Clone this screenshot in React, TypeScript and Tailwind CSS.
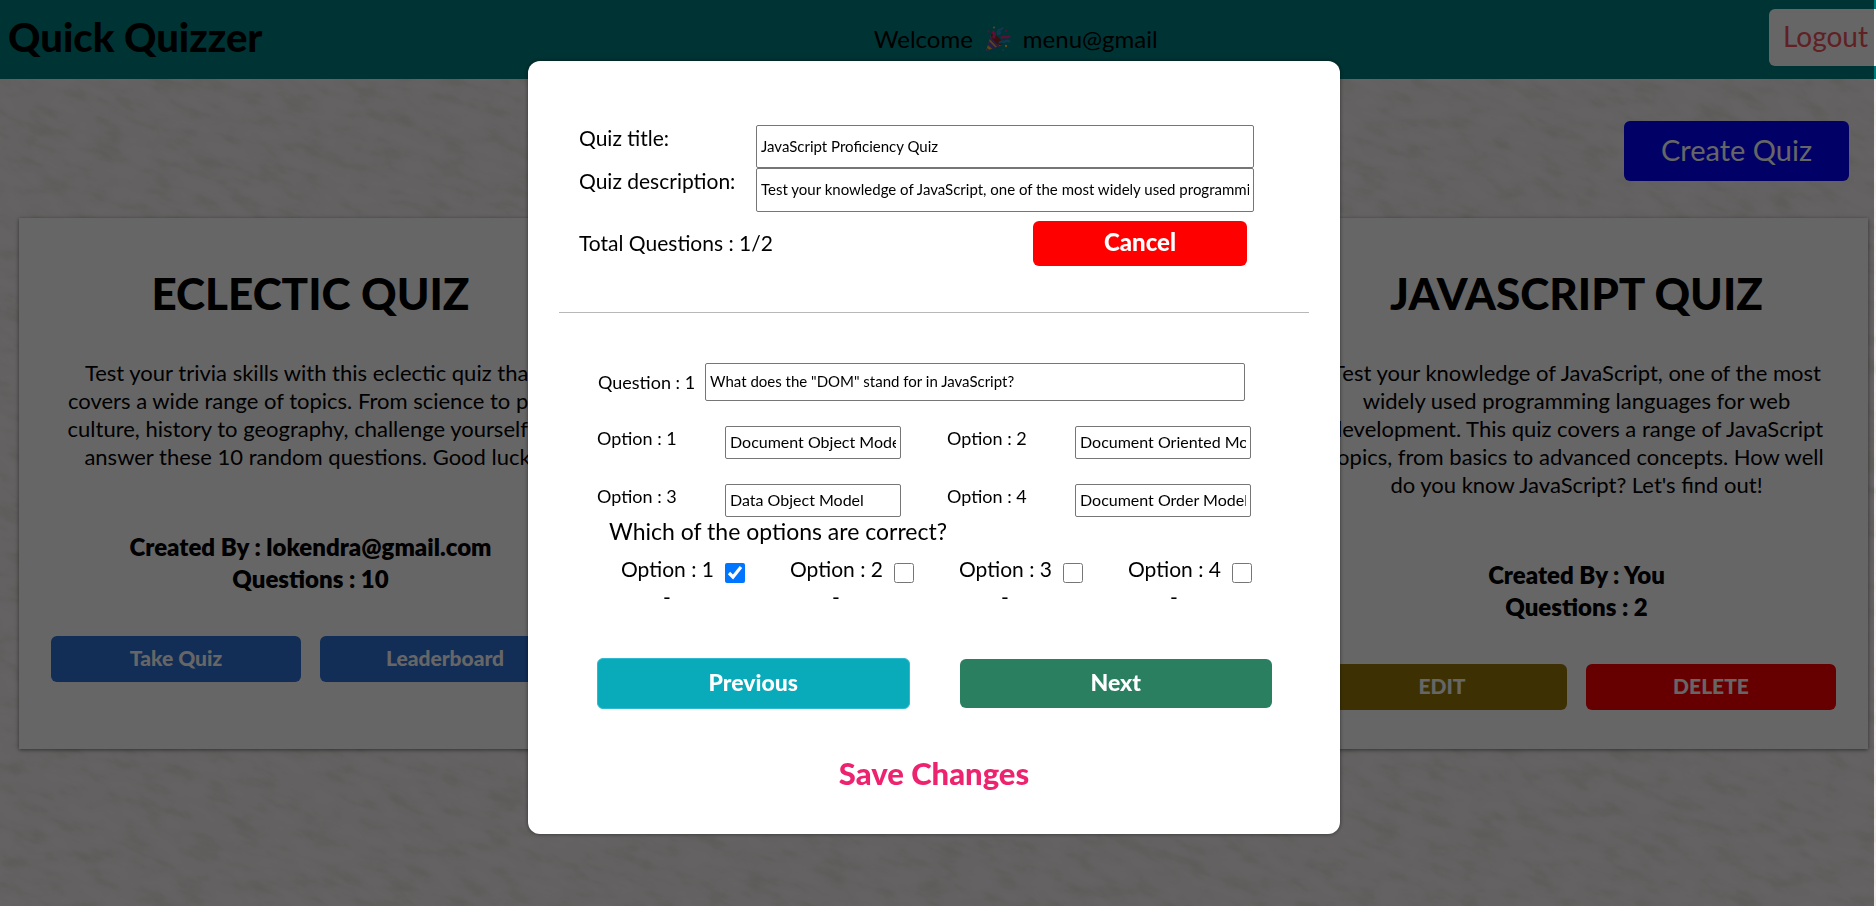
import { useState } from "react";

type Action = { label: string; tone: string };
type Quiz = {
  title: string;
  lines: string[];
  author: string;
  questions: number;
  actions: Action[];
};

const quizzes: Quiz[] = [
  {
    title: "ECLECTIC QUIZ",
    lines: [
      "Test your trivia skills with this eclectic quiz that",
      "covers a wide range of topics. From science to pop",
      "culture, history to geography, challenge yourself to",
      "answer these 10 random questions. Good luck!",
    ],
    author: "lokendra@gmail.com",
    questions: 10,
    actions: [
      { label: "Take Quiz", tone: "bg-[#2d70d8]" },
      { label: "Leaderboard", tone: "bg-[#2d70d8]" },
    ],
  },
  {
    title: "JAVASCRIPT QUIZ",
    lines: [
      "Test your knowledge of JavaScript, one of the most",
      "widely used programming languages for web",
      "development. This quiz covers a range of JavaScript",
      "topics, from basics to advanced concepts. How well",
      "do you know JavaScript? Let's find out!",
    ],
    author: "You",
    questions: 2,
    actions: [
      { label: "EDIT", tone: "bg-[#9a7b0a]" },
      { label: "DELETE", tone: "bg-[#ff0000]" },
    ],
  },
];

function PaperTexture() {
  return (
    <svg className="absolute inset-0 size-full" aria-hidden="true">
      <filter id="paper" x="0" y="0" width="100%" height="100%" colorInterpolationFilters="sRGB">
        <feTurbulence type="fractalNoise" baseFrequency="0.03 0.07" numOctaves="5" seed="8" />
        <feColorMatrix type="matrix" values="1 0 0 0 0  1 0 0 0 0  1 0 0 0 0  0 0 0 0 1" />
        <feComponentTransfer>
          <feFuncR type="table" tableValues="0.91 0.91 0.92 0.935 0.955 0.97 0.975 0.98 0.98 0.98 0.98" />
          <feFuncG type="table" tableValues="0.905 0.905 0.91 0.925 0.94 0.95 0.955 0.96 0.96 0.96 0.96" />
          <feFuncB type="table" tableValues="0.89 0.89 0.9 0.915 0.935 0.95 0.957 0.965 0.965 0.965 0.965" />
        </feComponentTransfer>
      </filter>
      <g transform="rotate(20)">
        <rect x="-100" y="-900" width="2500" height="2000" filter="url(#paper)" />
      </g>
    </svg>
  );
}

function PartyPopper() {
  return (
    <svg viewBox="0 0 26 26" className="size-[26px]" role="img" aria-label="party popper">
      <path d="M1 25 L6 9 C10 10 16 15 17 19 Z" fill="#f0a83a" />
      <path d="M4 15 L11 22 L7.500 23 L2.700 19 Z M5.500 10.500 L15 20.500 L12.500 21.500 L4.600 13 Z M2 22 L4.500 24 L1 25 Z" fill="#5a4fc0" />
      <ellipse cx="11.500" cy="13.500" rx="3" ry="7.500" transform="rotate(-45 11.500 13.500)" fill="#8c2a2a" />
      <path d="M8 12 C11 9 9 7 7.500 5" fill="none" stroke="#e0288c" strokeWidth="3" />
      <path d="M13 9 C12 5 15 4 15 7 C15 9 12 8 13 5 C14 3 17 4 18 1.500" fill="none" stroke="#2a8ac8" strokeWidth="2" />
      <path d="M14 17 C17 14 18 17 21 15 C23 14 24 15 25 16" fill="none" stroke="#2a8ac8" strokeWidth="2.400" />
      <path d="M16 12 C19 9 21 13 25 10" fill="none" stroke="#e0288c" strokeWidth="2.600" />
      <circle cx="9" cy="1.500" r="1" fill="#f0b83a" />
      <circle cx="3.500" cy="5.500" r="1.100" fill="#e0288c" />
      <circle cx="21" cy="5" r="1.100" fill="#e0288c" />
      <circle cx="21" cy="20" r="1.200" fill="#f0b83a" />
      <circle cx="18" cy="24" r="1" fill="#2a8ac8" />
    </svg>
  );
}

function QuizCard({ quiz }: { quiz: Quiz }) {
  return (
    <article className="flex min-h-[531px] w-[583px] flex-col items-center bg-white px-8 pt-[50px] text-center shadow-[0_1px_4px_rgba(0,0,0,0.5)]">
      <h2 className="text-[44px] leading-[50px] font-black">{quiz.title}</h2>
      <p className="mt-[41px] text-[22px] leading-7 whitespace-nowrap">
        {quiz.lines.map((line) => (
          <span key={line} className="block">
            {line}
          </span>
        ))}
      </p>
      <div className="mt-[60px] text-[24px] leading-8 font-extrabold">
        <p>Created By : {quiz.author}</p>
        <p>Questions : {quiz.questions}</p>
      </div>
      <div className="mt-[41px] flex gap-[19px] self-stretch">
        {quiz.actions.map((action) => (
          <button
            key={action.label}
            type="button"
            className={`h-[46px] flex-1 rounded-md pb-0.5 text-[21px] font-black text-white ${action.tone}`}
          >
            {action.label}
          </button>
        ))}
      </div>
    </article>
  );
}

const fieldStyle = "min-w-0 rounded-[2px] border border-[#767676] bg-white px-1 pb-0.5 text-[15px] text-black";
const optionStyle =
  "h-[33px] w-[176px] min-w-0 rounded-[2px] border border-[#767676] bg-white px-1 pb-0.5 text-[16px] text-black";

function EditDialog() {
  const [title, setTitle] = useState("JavaScript Proficiency Quiz");
  const [description, setDescription] = useState(
    "Test your knowledge of JavaScript, one of the most widely used programming languages for web development.",
  );
  const [question, setQuestion] = useState('What does the "DOM" stand for in JavaScript?');
  const [options, setOptions] = useState([
    "Document Object Model",
    "Document Oriented Model",
    "Data Object Model",
    "Document Order Model",
  ]);
  const [correct, setCorrect] = useState([true, false, false, false]);

  return (
    <form
      role="dialog"
      aria-label="Edit quiz"
      className="flex h-fit w-[812px] flex-col rounded-xl bg-white px-[31px] pt-16 pb-10 text-black shadow-[0_0_4px_rgba(0,0,0,0.5)]"
      onSubmit={(e) => e.preventDefault()}
    >
      <div className="grid grid-cols-[177px_498px] pl-5 text-[21px]">
        <label htmlFor="title" className="leading-[26px]">
          Quiz title:
        </label>
        <input id="title" className={`${fieldStyle} h-[43px]`} value={title} onChange={(e) => setTitle(e.target.value)} />
        <label htmlFor="description" className="leading-[26px]">
          Quiz description:
        </label>
        <input
          id="description"
          className={`${fieldStyle} h-11`}
          value={description}
          onChange={(e) => setDescription(e.target.value)}
        />
      </div>
      <div className="mt-[9px] flex items-center justify-between pr-[62px] pl-5">
        <p className="pb-0.5 text-[21px]">Total Questions : 1/2</p>
        <button type="button" className="h-[45px] w-[214px] rounded-md bg-[#ff0000] pb-1 text-[24px] font-black text-white">
          Cancel
        </button>
      </div>
      <hr className="mt-[46px] border-[#b8b8b8]" />

      <div className="mt-[50px] flex items-center justify-between pr-16 pl-[39px]">
        <label htmlFor="question" className="text-[18px]">
          Question : 1
        </label>
        <input
          id="question"
          className={`${fieldStyle} h-[38px] w-[540px]`}
          value={question}
          onChange={(e) => setQuestion(e.target.value)}
        />
      </div>
      <div className="mt-[25px] grid grid-cols-[304px_304px] gap-x-[46px] gap-y-[25px] pl-[38px]">
        {options.map((option, i) => (
          <div key={i} className="flex justify-between">
            <label htmlFor={`option-${i}`} className="text-[18px] leading-6">
              Option : {i + 1}
            </label>
            <input
              id={`option-${i}`}
              className={optionStyle}
              value={option}
              onChange={(e) => setOptions(options.map((o, n) => (n === i ? e.target.value : o)))}
            />
          </div>
        ))}
      </div>

      <fieldset className="pl-[50px]">
        <legend className="text-[23px] leading-7">Which of the options are correct?</legend>
        <div className="grid grid-cols-4 pt-3 pr-3 pl-3">
          {correct.map((checked, i) => (
            <div key={i} className="text-[21px]">
              <label className="flex items-start gap-3 leading-6">
                <span className="w-[92px] whitespace-nowrap">Option : {i + 1}</span>
                <input
                  type="checkbox"
                  className="mt-1.5 size-5 accent-[#0075ff]"
                  checked={checked}
                  onChange={(e) => setCorrect(correct.map((c, n) => (n === i ? e.target.checked : c)))}
                />
              </label>
              <p className="w-[92px] text-center leading-7">-</p>
            </div>
          ))}
        </div>
      </fieldset>

      <div className="mt-[47px] grid grid-cols-2 items-center gap-[50px] pr-[37px] pl-[38px] text-[23px] font-black text-white">
        <button type="button" className="h-[51px] rounded-md border border-[#2fb9d0] bg-[#09aaba] pb-0.5">
          Previous
        </button>
        <button type="button" className="h-[49px] rounded-md bg-[#2b7f61] pb-0.5">
          Next
        </button>
      </div>
      <button type="submit" className="mt-11 mb-px self-center text-[31px] leading-[40px] font-black text-[#ee2370]">
        Save Changes
      </button>
    </form>
  );
}

export default function App() {
  return (
    <div className="relative min-h-screen overflow-hidden bg-[#faf6f6] font-['Lato',sans-serif] text-black">
      <PaperTexture />
      <div className="relative">
        <header className="flex h-[79px] items-center justify-between bg-[#008080] pb-1 pl-2">
          <h1 className="pb-0.5 text-[40px] font-black">Quick Quizzer</h1>
          <p className="flex items-center gap-3 pt-0.5 text-[24px]">
            <span>Welcome</span>
            <PartyPopper />
            <span>menu@gmail</span>
          </p>
          <button type="button" className="h-[57px] rounded-l-md bg-white pr-2 pb-1 pl-[14px] text-[28px] text-[#f0505a]">
            Logout
          </button>
        </header>
        <main className="pt-[42px] pr-2 pl-[19px]">
          <div className="flex justify-end pr-[19px]">
            <button type="button" className="h-[60px] w-[225px] rounded-md bg-[#0000ff] pb-0.5 text-[29px] text-white">
              Create Quiz
            </button>
          </div>
          <div className="mt-[37px] flex justify-between">
            {quizzes.map((quiz) => (
              <QuizCard key={quiz.title} quiz={quiz} />
            ))}
          </div>
        </main>
      </div>
      <div className="fixed inset-y-0 right-0.5 left-0 flex items-start justify-center bg-black/60 pt-[61px] pr-1.5">
        <EditDialog />
      </div>
    </div>
  );
}
